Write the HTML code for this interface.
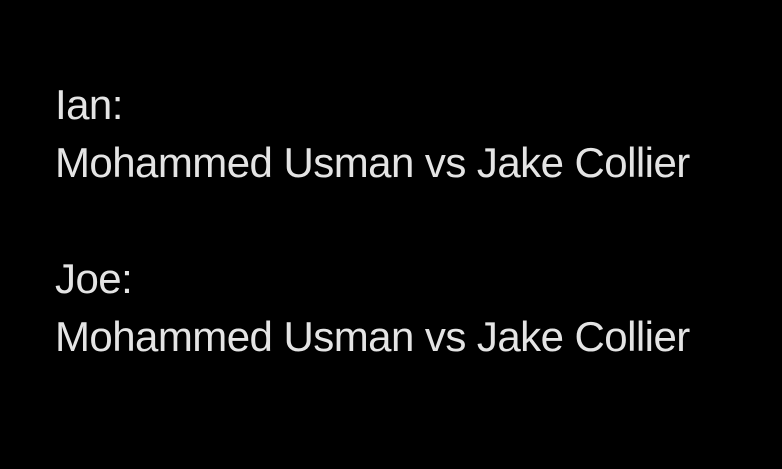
<!DOCTYPE html>
<html><head><meta charset="utf-8"><style>
html,body{margin:0;padding:0;background:#000;width:782px;height:469px;overflow:hidden}
.t{position:absolute;left:55px;top:76px;font-family:"Liberation Sans",sans-serif;font-size:42px;line-height:58px;color:#e4e4e4;white-space:nowrap;letter-spacing:-0.55px}
</style></head><body>
<div class="t">Ian:<br>Mohammed Usman vs Jake Collier<br><br>Joe:<br>Mohammed Usman vs Jake Collier</div>
</body></html>
